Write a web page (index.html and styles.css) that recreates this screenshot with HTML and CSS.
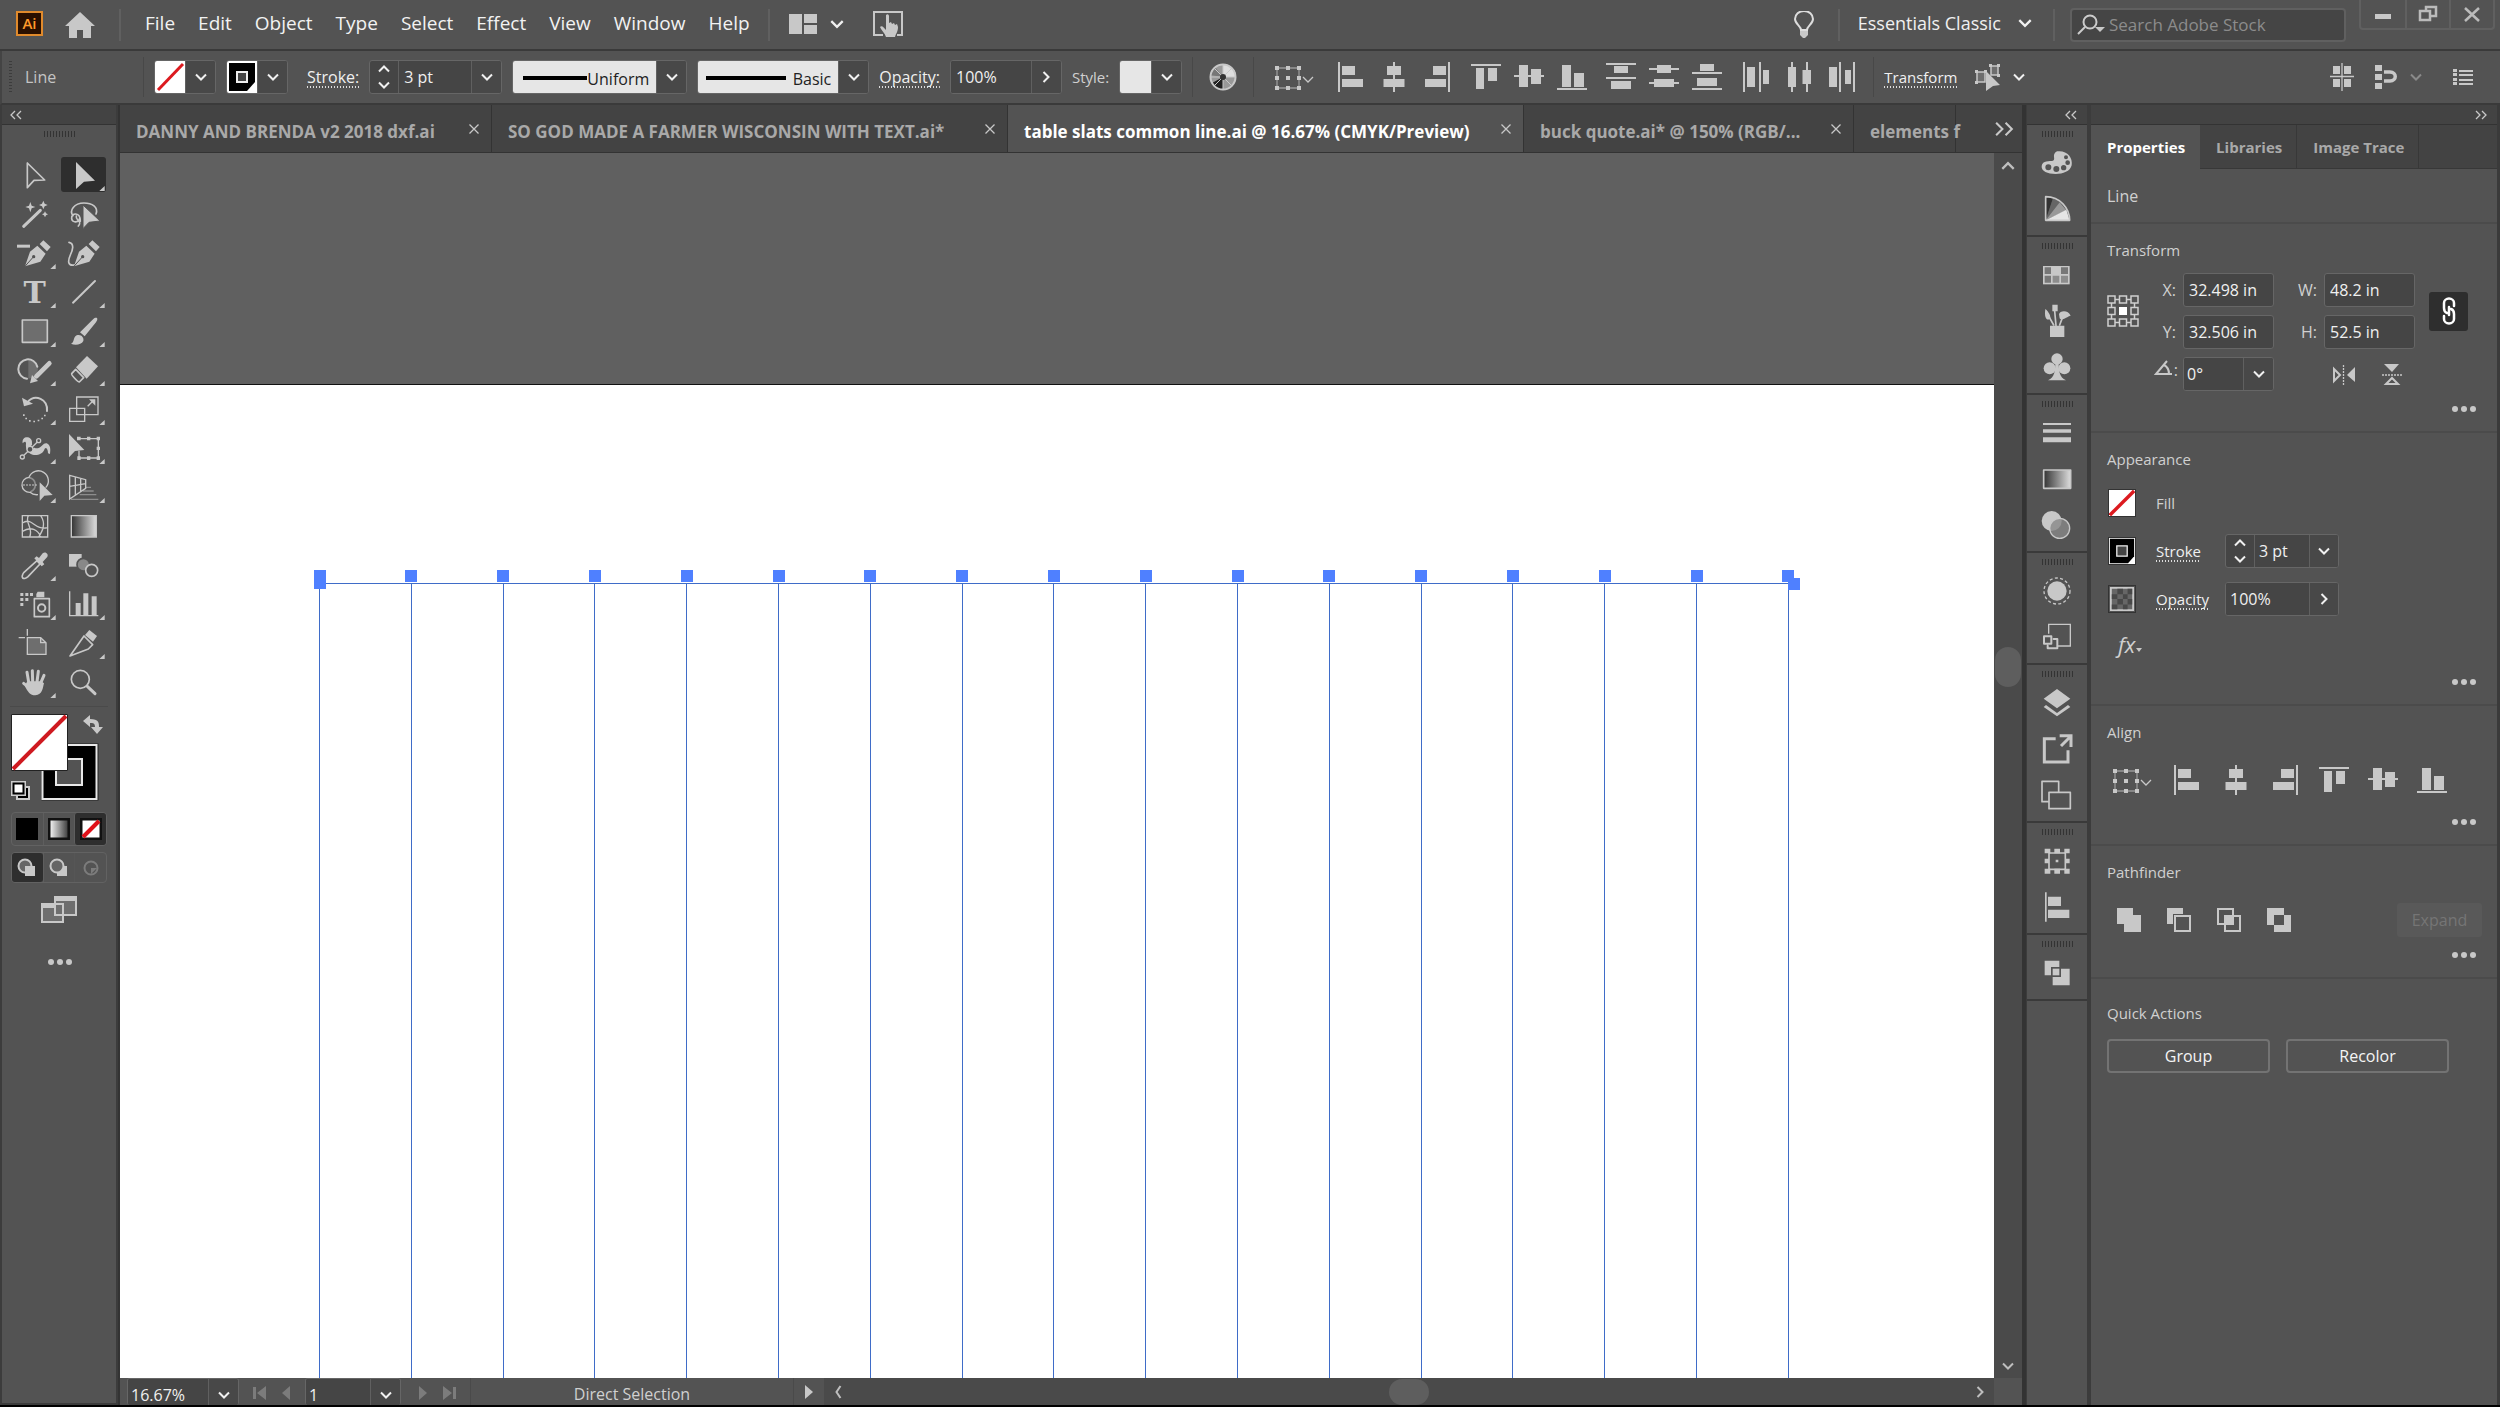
FILE: index.html
```
<!DOCTYPE html>
<html lang="en">
<head>
    <meta charset="utf-8">
    <meta name="viewport" content="width=device-width, initial-scale=1">
    <title>table slats common line.ai</title>
    <link rel="stylesheet" href="styles.css">
</head>
<body>

<!-- shared symbols -->
<svg class="defs" aria-hidden="true">
    <defs>
        <linearGradient id="fade"><stop offset="0" stop-color="#333"/><stop offset="1" stop-color="#ddd"/></linearGradient>
        <linearGradient id="fadeBack"><stop offset="0" stop-color="#fff"/><stop offset="1" stop-color="#333"/></linearGradient>
        <symbol id="down" viewBox="0 0 14 14"><path class="ln" d="M2 4.500l5 5 5-5"/></symbol>
        <symbol id="up" viewBox="0 0 14 14"><path class="ln" d="M2 9.500l5-5 5 5"/></symbol>
        <symbol id="right" viewBox="0 0 14 14"><path class="ln" d="M4.500 2l5 5-5 5"/></symbol>
        <symbol id="left" viewBox="0 0 14 14"><path class="ln" d="M9.500 1l-4 6 4 6"/></symbol>
        <symbol id="x" viewBox="0 0 14 14"><path class="thin" d="M2.500 2.500l9 9m0-9l-9 9"/></symbol>
        <symbol id="collapse" viewBox="0 0 14 14"><path class="thin" d="M6 3L2 7l4 4M12 3L8 7l4 4"/></symbol>
        <symbol id="expand" viewBox="0 0 14 14"><path class="thin" d="M2 3l4 4-4 4M8 3l4 4-4 4"/></symbol>
        <symbol id="dots" viewBox="0 0 24 8"><circle cx="3" cy="4" r="3"/><circle cx="12" cy="4" r="3"/><circle cx="21" cy="4" r="3"/></symbol>
        <symbol id="more" viewBox="0 0 135 105"><path d="M131 87v15h-16z"/></symbol>
        <symbol id="none" viewBox="0 0 30 30"><path fill="#fff" d="M0 0h30v30H0z"/><path stroke="#dc1a1f" stroke-width="4" d="M1 29L29 1"/></symbol>
        <symbol id="ring" viewBox="0 0 30 30"><path fill="#fff" d="M0 0h30v30H0z"/><path fill="#000" d="M1 1h28v20l-7 8H1z"/><path fill="#444" stroke="#eee" stroke-width="1.500" d="M9 9h12v12H9z"/></symbol>

        <symbol id="alignTo" viewBox="0 0 42 30"><path class="thin" stroke-opacity=".6" d="M5 6h22v20H5z"/><path d="M3 4h4v4H3zM14 4h4v4h-4zM25 4h4v4h-4zM3 14h4v4H3zM14 14h4v4h-4zM25 14h4v4h-4zM3 24h4v4H3zM14 24h4v4h-4zM25 24h4v4h-4z"/><path class="thin" stroke-width="2" d="M31 15l5 5 5-5"/></symbol>
        <symbol id="aLeft" viewBox="0 0 30 30"><path d="M2 0h2v30H2zM6 4h13v9H6zM6 17h21v8H6z"/></symbol>
        <symbol id="aCenter" viewBox="0 0 30 30"><path d="M14 0h2v30h-2zM8 4h14v9H8zM4.500 17h21v8h-21z"/></symbol>
        <symbol id="aRight" viewBox="0 0 30 30"><path d="M26 0h2v30h-2zM11 4h13v9H11zM3 17h21v8H3z"/></symbol>
        <symbol id="aTop" viewBox="0 0 30 30"><path d="M0 2h30v2H0zM5 6h8v21H5zM17 6h9v13h-9z"/></symbol>
        <symbol id="aMiddle" viewBox="0 0 30 30"><path d="M0 13h30v2H0zM5 3h9v22H5zM17 7h10v15H17z"/></symbol>
        <symbol id="aBottom" viewBox="0 0 30 30"><path d="M0 26h30v2H0zM5 3h9v22H5zM17 11h10v14H17z"/></symbol>
        <symbol id="dTop" viewBox="0 0 30 30"><path d="M0 1h30v2H0zM8 4h14v7H8zM0 15h30v2H0zM5 19h20v8H5z"/></symbol>
        <symbol id="dMiddle" viewBox="0 0 30 30"><path d="M0 6h30v2H0zM8 3h14v8H8zM0 20h30v2H0zM5 17h20v8H5z"/></symbol>
        <symbol id="dBottom" viewBox="0 0 30 30"><path d="M8 2h14v7H8zM0 10h30v2H0zM5 16h20v8H5zM0 26h30v2H0z"/></symbol>
        <symbol id="dLeft" viewBox="0 0 30 30"><path d="M2 0h2v30H2zM6 5h8v20H6zM18 0h2v30h-2zM22 8h6v14h-6z"/></symbol>
        <symbol id="dCenter" viewBox="0 0 30 30"><path d="M7 0h2v30H7zM4 5h8v20H4zM22 0h2v30h-2zM18.500 8H27v14h-8.500z"/></symbol>
        <symbol id="dRight" viewBox="0 0 30 30"><path d="M2 5h8v20H2zM12 0h2v30h-2zM18 8h6v14h-6zM26 0h2v30h-2z"/></symbol>
        <symbol id="nib" viewBox="0 0 135 105"><path d="M94 16l22 20-11 13-22-22zM76 32l25 24-16 24-46 14 15-44z"/><path stroke="#535353" stroke-width="3" d="M38 95l25-28"/><circle cx="65" cy="65" r="5" fill="#535353"/></symbol>
    </defs>
</svg>

<div class="app">

<header class="menubar">
    <span class="logo">Ai</span>
    <button class="home" aria-label="Home"><svg width="30" height="26" viewBox="0 0 30 26"><path d="M15 0L0 14h4v12h8v-8h6v8h8V14h4z"/></svg></button>
    <nav class="menus">
        <button>File</button><button>Edit</button><button>Object</button><button>Type</button><button>Select</button><button>Effect</button><button>View</button><button>Window</button><button>Help</button>
    </nav>
    <button class="arrange" aria-label="Arrange documents"><svg width="28" height="20" viewBox="0 0 28 20"><path d="M0 0h13v20H0zM15 0h13v9H15zM15 11h13v9H15z"/></svg><svg class="chev" width="16" height="16"><use href="#down"/></svg></button>
    <button aria-label="Touch workspace"><svg width="32" height="28" viewBox="0 0 32 28"><path fill="none" stroke="#c8c8c8" stroke-width="2" d="M11 25H2V2h28v23h-5"/><path d="M14 5c2-2 3 0 3 1v7l2-1 1 2 2-1 1 2 2-1 1 3c0 5-2 6-3 10h-9c-1-4-5-7-6-10 2-2 4 1 6 3z"/></svg></button>
    <div class="menuright">
        <button class="bulb" aria-label="Learn"><svg width="22" height="28" viewBox="0 0 22 28"><path fill="none" stroke="#ddd" stroke-width="2" d="M8 19c0-4-6-6-6-11a9 8 0 0118 0c0 5-6 7-6 11z"/><path d="M7 20h8v4l-3 3h-2l-3-3z"/></svg></button>
        <button class="workspace-name">Essentials Classic<svg width="16" height="16"><use href="#down"/></svg></button>
        <label class="search"><svg width="30" height="22" viewBox="0 0 30 22"><g fill="none" stroke="#ccc" stroke-width="2"><circle cx="13" cy="8" r="6.500"/><path d="M8 13l-7 7"/></g><path d="M18 13h10l-5 5z"/></svg><input type="search" placeholder="Search Adobe Stock" aria-label="Search Adobe Stock"></label>
        <div class="winbtns">
            <button aria-label="Minimize"><svg width="18" height="18" viewBox="0 0 18 18"><path d="M1 9h16v5H1z"/></svg></button>
            <button aria-label="Restore"><svg width="20" height="18" viewBox="0 0 20 18"><path fill="none" stroke="#bbb" stroke-width="2.500" d="M8 6V2h10v9h-5M2 6h10v9H2z"/></svg></button>
            <button aria-label="Close"><svg width="18" height="18" viewBox="0 0 18 18"><path stroke="#bbb" stroke-width="2.500" d="M2 3l14 13M16 3L2 16"/></svg></button>
        </div>
    </div>
</header>

<div class="control">
    <div class="kind"><i class="vgrip"></i>Line</div>
    <button class="combo swatch" aria-label="Fill"><svg width="30" height="32" viewBox="0 0 30 32"><path fill="#fff" d="M0 0h30v32H0z"/><path stroke="#dc1a1f" stroke-width="3" d="M3 29L28 3"/></svg><span class="drop"><svg width="14" height="14"><use href="#down"/></svg></span></button>
    <button class="combo swatch" aria-label="Stroke color"><svg width="30" height="32" viewBox="0 0 30 32"><path fill="#fff" d="M0 0h30v32H0z"/><path fill="#000" d="M2 2h26v19l-8 9H2z"/><path fill="#444" stroke="#eee" stroke-width="2" d="M10 11h10v10H10z"/></svg><span class="drop"><svg width="14" height="14"><use href="#down"/></svg></span></button>
    <label class="under first" for="cw">Stroke:</label>
    <div class="combo">
        <span class="step"><button aria-label="More"><svg width="14" height="14"><use href="#up"/></svg></button><button aria-label="Less"><svg width="14" height="14"><use href="#down"/></svg></button></span>
        <input id="cw" class="w72" value="3 pt"><button class="drop" aria-label="Stroke weights"><svg width="14" height="14"><use href="#down"/></svg></button>
    </div>
    <div class="combo"><select class="brush uniform" aria-label="Width profile"><option>Uniform</option></select><span class="drop"><svg width="14" height="14"><use href="#down"/></svg></span></div>
    <div class="combo"><select class="brush" aria-label="Brush"><option>Basic</option></select><span class="drop"><svg width="14" height="14"><use href="#down"/></svg></span></div>
    <label class="under" for="co">Opacity:</label>
    <div class="combo"><input id="co" class="w80" value="100%"><button class="drop" aria-label="Opacity slider"><svg width="14" height="14"><use href="#right"/></svg></button></div>
    <span class="dim">Style:</span>
    <button class="combo swatch" aria-label="Style"><span class="plain"></span><span class="drop"><svg width="14" height="14"><use href="#down"/></svg></span></button>
    <button class="wheel" aria-label="Recolor artwork"><svg width="28" height="28" viewBox="0 0 28 28"><circle cx="14" cy="14" r="13" fill="#999"/><path fill="#ddd" d="M14 14V1a13 13 0 0113 13z"/><path fill="#222" d="M14 14v13a13 13 0 01-11-7z"/><path fill="#777" d="M14 14L1 12 6 4z"/><g fill="none" stroke="#c8c8c8" stroke-width="2"><circle cx="14" cy="14" r="12.500"/><path stroke-width="1" d="M14 1v26M1 14h26M5 5l18 18M23 5L5 23"/></g><circle cx="14" cy="14" r="3" fill="#333"/></svg></button>
    <button class="alignto" aria-label="Align to"><svg width="42" height="30"><use href="#alignTo"/></svg></button>
    <div class="aligns">
        <div><button aria-label="Align left"><svg><use href="#aLeft"/></svg></button><button aria-label="Align center"><svg><use href="#aCenter"/></svg></button><button aria-label="Align right"><svg><use href="#aRight"/></svg></button></div>
        <div><button aria-label="Align top"><svg><use href="#aTop"/></svg></button><button aria-label="Align middle"><svg><use href="#aMiddle"/></svg></button><button aria-label="Align bottom"><svg><use href="#aBottom"/></svg></button></div>
        <div><button aria-label="Distribute top"><svg><use href="#dTop"/></svg></button><button aria-label="Distribute middle"><svg><use href="#dMiddle"/></svg></button><button aria-label="Distribute bottom"><svg><use href="#dBottom"/></svg></button></div>
        <div><button aria-label="Distribute left"><svg><use href="#dLeft"/></svg></button><button aria-label="Distribute center"><svg><use href="#dCenter"/></svg></button><button aria-label="Distribute right"><svg><use href="#dRight"/></svg></button></div>
    </div>
    <button class="under small">Transform</button>
    <button class="isolate" aria-label="Isolate"><svg width="28" height="28" viewBox="0 0 28 28"><g fill="#6e6e6e" stroke="#c8c8c8" stroke-width="1.500"><path d="M3 9h8v10H3zM17 3h7v9h-7z"/></g><path d="M1 7h3v3H1zM10 7h3v3h-3zM1 18h3v3H1zM15 1h3v3h-3zM23 1h3v3h-3zM23 11h3v3h-3zM12 8l14 14-7 1-7 5z"/></svg><svg class="chev" width="14" height="14"><use href="#down"/></svg></button>
    <div class="controlright">
        <button aria-label="Snap to pixel"><svg width="24" height="28" viewBox="0 0 24 28"><path d="M3 3h7v8H3zM14 3h7v8h-7zM3 16h7v8H3zM14 16h7v8h-7z"/><path class="thin" d="M12 0v28M0 13.500h24"/></svg></button>
        <button class="snap" aria-label="Snap options"><svg width="24" height="26" viewBox="0 0 24 26"><path d="M1 1h7v6H1zM1 10h7v6H1zM1 19h7v6H1z"/><path fill="none" stroke="#c8c8c8" stroke-width="3.500" d="M10 8h6c7 0 7 9 0 9h-6"/></svg><svg class="faint" width="14" height="14"><use href="#down"/></svg></button>
        <button aria-label="Panel menu"><svg width="20" height="18" viewBox="0 0 20 18"><path d="M0 1h4v3H0zM0 5h4v3H0zM0 10h4v3H0zM0 14h4v3H0zM6 2h14v2H6zM6 6h14v2H6zM6 11h14v2H6zM6 15h14v2H6z"/></svg></button>
    </div>
</div>

<div class="body">

<aside class="toolbox">
    <div class="fold"><svg width="14" height="14"><use href="#collapse"/></svg></div>
    <i class="grip"></i>
    <div class="tools">
        <button aria-label="Selection"><svg viewBox="0 0 135 105"><path class="o" d="M46 18v74l20-22 32-1z"/></svg></button>
        <button class="on" aria-label="Direct selection"><svg viewBox="0 0 135 105"><path d="M45 15v81l24-22 33-3z"/><use href="#more"/></svg></button>
        <button aria-label="Magic wand"><svg viewBox="0 0 135 105"><path class="o w9" d="M35 91l50-48"/><path d="M55 18l4 11 11 4-11 4-4 12-4-12-11-4 11-4zM94 14l4 9 9 4-9 4-4 9-4-9-9-4 9-4zM99 46l3 6 6 3-6 3-3 6-3-6-6-3 6-3z"/></svg></button>
        <button aria-label="Lasso"><svg viewBox="0 0 135 105"><path class="o" d="M105 54c8-21-12-33-36-33-30 0-45 23-33 38M58 76c0-30-28-26-26-8 1 14 23 12 24-2M46 60c-4 14 20 14 6 30"/><path stroke="#535353" stroke-width="3" d="M66 27v71l18-19 33-4z"/></svg></button>
        <button aria-label="Delete anchor point"><svg viewBox="0 0 135 105"><path d="M15 29h39v9H15z"/><use href="#nib"/><use href="#more"/></svg></button>
        <button aria-label="Curvature"><svg viewBox="0 0 135 105"><path class="o" d="M24 22c18 4 10 26 4 38-8 18-8 34 12 30"/><use href="#nib"/></svg></button>
        <button aria-label="Type"><svg viewBox="0 0 135 105"><text class="tee" x="68" y="87">T</text><use href="#more"/></svg></button>
        <button aria-label="Line segment"><svg viewBox="0 0 135 105"><path class="o w6" d="M36 86l66-65"/><use href="#more"/></svg></button>
        <button aria-label="Rectangle"><svg viewBox="0 0 135 105"><path class="o f" d="M31 21h75v67H31z"/><use href="#more"/></svg></button>
        <button aria-label="Paintbrush"><svg viewBox="0 0 135 105"><path d="M108 15c3 3-1 10-3 13L71 70 57 58 97 18c3-3 8-5 11-3zM30 92c12-4 4-17 17-25 12-5 23 6 20 17-6 12-26 14-37 8z"/><use href="#more"/></svg></button>
        <button aria-label="Shaper"><svg viewBox="0 0 135 105"><path class="f" d="M49 22a29 29 0 010 58z"/><path class="o w6" d="M45 80A29 29 0 1176 44"/><path class="o w14" d="M112 34L73 73"/><path d="M54 94l6-25 18 18z"/><use href="#more"/></svg></button>
        <button aria-label="Eraser"><svg viewBox="0 0 135 105"><path d="M78 12l33 31-34 37-32-34z"/><path class="o" d="M44 52L32 65c-2 3 18 25 23 25l13-13z"/><use href="#more"/></svg></button>
        <button aria-label="Rotate"><svg viewBox="0 0 135 105"><path class="o w6" d="M46 34c24-28 62-8 59 26"/><path d="M30 20l6 26 27-8z"/><path d="M33 70h5v5h-5zM40 80h5v5h-5zM51 87h5v5h-5zM64 89h5v5h-5zM77 86h5v5h-5zM88 80h5v5h-5zM96 71h5v5h-5z"/><use href="#more"/></svg></button>
        <button aria-label="Scale"><svg viewBox="0 0 135 105"><path class="o s4" d="M47 18h64v53H47zM26 52h45v39H26zM80 46l18-18"/><path d="M84 25h19v19z"/><use href="#more"/></svg></button>
        <button aria-label="Width"><svg viewBox="0 0 135 105"><path d="M32 40c-4-26 30-22 28-2-1 10 8 20 20 16 10-4 14-16 24-14 12 4 12 20 10 32l-6-2c0-10-4-20-10-14-4 16-24 22-36 18-16-4-22-18-20-34-2-8-6-4-10 0z"/><path stroke="#535353" stroke-width="10" d="M36 76l40-40"/><g class="o s4"><path d="M36 76l40-40"/><circle cx="31" cy="81" r="6"/><circle class="bg" cx="54" cy="58" r="9"/><circle cx="80" cy="32" r="6"/></g><use href="#more"/></svg></button>
        <button aria-label="Free transform"><svg viewBox="0 0 135 105"><path class="o s4" d="M54 26h58v58H54V62"/><path d="M24 12v70l18-19 28-3zM48 20h11v11H48zM78 20h10v11H78zM107 20h10v11h-10zM107 50h10v10h-10zM107 79h10v11h-10zM78 79h10v11H78zM49 79h10v11H49z"/><use href="#more"/></svg></button>
        <button aria-label="Shape builder"><svg viewBox="0 0 135 105"><path class="o s4" d="M78 77a30 30 0 01-24-7A22 22 0 1151 25 30 30 0 11101 56"/><path class="o s4" stroke-dasharray="4 5" d="M34 48h45"/><path class="o" stroke-width="2" stroke-opacity=".5" d="M52 26a22 22 0 014 42"/><path d="M83 40v56l14-16 25-2z"/><use href="#more"/></svg></button>
        <button aria-label="Perspective grid"><svg viewBox="0 0 135 105"><path class="o s4" d="M26 19l48 13v26L26 90zM43 24v54M59 28v42M26 52l48-8"/><path class="o s4" stroke-opacity=".5" d="M75 55h15M66 66h32M56 77h50M30 91h82"/><use href="#more"/></svg></button>
        <button aria-label="Mesh"><svg viewBox="0 0 135 105"><path class="o s4" d="M31 23h76v64H31zM49 23c-12 22 16 36 4 64M86 23c18 26 4 48-6 64M31 45c30-20 36 24 76 14M31 70c26-16 46-6 56 17"/></svg></button>
        <button aria-label="Gradient"><svg viewBox="0 0 135 105"><path class="o s4 fade" d="M31 23h75v64H31z"/></svg></button>
        <button aria-label="Eyedropper"><svg viewBox="0 0 135 105"><path class="o" d="M75 41L36 76c-4 5-8 14-4 17s12 0 16-4l36-38z"/><path d="M67 34l7-6 7 5 11-14c8-8 20 3 13 12L92 45l5 7-8 6z"/><use href="#more"/></svg></button>
        <button aria-label="Blend"><svg viewBox="0 0 135 105"><path d="M24 21h38v38H24z"/><circle cx="67" cy="53" r="19" fill="#888" stroke="#535353" stroke-width="5"/><circle class="o bg" cx="92" cy="70" r="18"/></svg></button>
        <button aria-label="Symbol sprayer"><svg viewBox="0 0 135 105"><path d="M25 21h9v9h-9zM40 21h9v9h-9zM54 21h9v9h-9zM25 36h9v9h-9zM40 36h9v9h-9zM25 51h9v9h-9zM77 17h20v17H73V24z"/><path class="o" d="M67 38h45v54H67z"/><circle class="o w6" cx="89" cy="66" r="11"/><use href="#more"/></svg></button>
        <button aria-label="Column graph"><svg viewBox="0 0 135 105"><path class="o s4" d="M26 16v73h86"/><path d="M44 51h15v37H44zM67 22h15v66H67zM92 31h15v57H92z"/><use href="#more"/></svg></button>
        <button aria-label="Artboard"><svg viewBox="0 0 135 105"><path class="o s4 f" d="M46 38h40l16 15v35H46z"/><path class="o s4" d="M46 12v20M20 38h19M86 38v15h16"/></svg></button>
        <button aria-label="Slice"><svg viewBox="0 0 135 105"><path class="o" d="M27 93l42-60 26 26-13 13z"/><path d="M85 15l23 18-12 17-24-20z"/><use href="#more"/></svg></button>
        <button aria-label="Hand"><svg viewBox="0 0 135 105"><path class="o w9" d="M51 60L45 25M62 54l-1-34M75 54l4-32M84 62l12-28M55 74L35 58"/><path d="M46 52h42l8 6c-4 14-4 34-26 36-16 0-22-10-32-28z"/><use href="#more"/></svg></button>
        <button aria-label="Zoom"><svg viewBox="0 0 135 105"><circle class="o" cx="58" cy="46" r="27"/><path class="o w9" d="M79 67l23 22"/></svg></button>
    </div>

    <div class="paint">
        <svg width="96" height="90" viewBox="0 0 96 90">
            <path d="M72 7l7-6v4c9 0 9 4 9 8h4l-6 7-6-7h4c0-4-2-4-5-4v4z"/>
            <path fill="#000" stroke="#222" stroke-width="3" d="M32 31h54v54H32z"/><path fill="#000" stroke="#e8e8e8" stroke-width="2" d="M31.500 31h54v54h-54z"/>
            <path fill="#535353" stroke="#e8e8e8" stroke-width="2" d="M45 45h26v26H45z"/>
            <path fill="#fff" stroke="#222" d="M.5.5h56v56H.5z"/><path stroke="#cf1a20" stroke-width="4" d="M2 55L55 2"/>
            <path fill="#000" stroke="#ccc" stroke-width="2" d="M6 73h12v12H6z"/><path fill="#fff" stroke="#ccc" stroke-width="3" d="M1.500 68.500h12v12h-12z"/><path fill="#fff" stroke="#000" stroke-width="2" d="M2.500 69.500h10v10h-10z"/>
        </svg>
    </div>
    <div class="trio">
        <button aria-label="Color"><svg width="22" height="22"><path fill="#000" d="M0 0h22v22H0z"/></svg></button>
        <button aria-label="Gradient fill"><svg width="22" height="22"><path fill="url(#fadeBack)" stroke="#111" stroke-width="3" d="M1 1h20v20H1z"/></svg></button>
        <button class="on" aria-label="None"><svg width="22" height="22" viewBox="0 0 22 22"><path fill="#fff" stroke="#111" stroke-width="3" d="M1 1h20v20H1z"/><path stroke="#e0121a" stroke-width="4" d="M3 19L19 3"/></svg></button>
    </div>
    <div class="trio second">
        <button class="on" aria-label="Draw normal"><svg width="20" height="20"><circle cx="8" cy="8" r="6.500" fill="#666" stroke="#c8c8c8" stroke-width="2"/><path d="M8 8h10v10H8z"/></svg></button>
        <button aria-label="Draw behind"><svg width="20" height="20"><path d="M8 8h10v10H8z"/><circle cx="8" cy="8" r="6.500" fill="#666" stroke="#c8c8c8" stroke-width="2"/></svg></button>
        <button class="faint" aria-label="Draw inside" disabled><svg width="16" height="16"><circle cx="8" cy="8" r="6.500" fill="none" stroke="#c8c8c8" stroke-width="2"/><path d="M8 8h6l-6 6z"/></svg></button>
    </div>
    <button class="screens" aria-label="Screen mode"><svg width="36" height="28" viewBox="0 0 36 28"><path fill="#6e6e6e" stroke="#c8c8c8" stroke-width="2" d="M1 8h21v18H1zM14 1h21v18H14z"/><path d="M0 7h13v5H0zM13 0h23v5H13z"/></svg></button>
    <button class="edit" aria-label="Edit toolbar"><svg width="24" height="8"><use href="#dots"/></svg></button>
</aside>

<main class="doc">
    <div class="doctabs">
        <div class="doctab t1"><span>DANNY AND BRENDA v2 2018 dxf.ai</span><button aria-label="Close tab"><svg width="14" height="14"><use href="#x"/></svg></button></div>
        <div class="doctab t2"><span>SO GOD MADE A FARMER WISCONSIN WITH TEXT.ai*</span><button aria-label="Close tab"><svg width="14" height="14"><use href="#x"/></svg></button></div>
        <div class="doctab t2 active"><span>table slats common line.ai @ 16.67% (CMYK/Preview)</span><button aria-label="Close tab"><svg width="14" height="14"><use href="#x"/></svg></button></div>
        <div class="doctab t3"><span>buck quote.ai* @ 150% (RGB/...</span><button aria-label="Close tab"><svg width="14" height="14"><use href="#x"/></svg></button></div>
        <div class="doctab t4"><span>elements f</span></div>
        <button class="overflow" aria-label="More documents"><svg width="22" height="22"><use href="#expand"/></svg></button>
    </div>
    <div class="view">
        <svg class="canvas">
            <rect y="231" width="100%" height="100%" fill="#111"/>
            <rect y="232" width="100%" height="100%" fill="#fff"/>
            <!-- slat lines, clipped by the view -->
            <path class="slat" d="M199.500 430.500H1668M199.500 430v2000M291.500 430v2000M383.500 430v2000M474.500 430v2000M566.500 430v2000M658.500 430v2000M750.500 430v2000M842.500 430v2000M933.500 430v2000M1025.500 430v2000M1117.500 430v2000M1209.500 430v2000M1301.500 430v2000M1392.500 430v2000M1484.500 430v2000M1576.500 430v2000M1668.500 430v2000"/>
            <path class="anchor" d="M194 417h12v19h-12zM285 417h12v12h-12zM377 417h12v12h-12zM469 417h12v12h-12zM561 417h12v12h-12zM653 417h12v12h-12zM744 417h12v12h-12zM836 417h12v12h-12zM928 417h12v12h-12zM1020 417h12v12h-12zM1112 417h12v12h-12zM1203 417h12v12h-12zM1295 417h12v12h-12zM1387 417h12v12h-12zM1479 417h12v12h-12zM1571 417h12v12h-12zM1662 417h12v12h-12zM1668 425h12v12h-12z"/>
        </svg>
        <div class="vscroll"><svg width="16" height="16"><use href="#up"/></svg><i></i><svg width="14" height="14"><use href="#down"/></svg></div>
    </div>
    <footer class="status">
        <div class="combo"><input class="w80" value="16.67%" aria-label="Zoom"><button class="drop" aria-label="Zoom levels"><svg width="14" height="14"><use href="#down"/></svg></button></div>
        <div class="nav"><svg width="14" height="14" viewBox="0 0 14 14"><path d="M0 1h3v12H0zM13 0v14L4 7z"/></svg><svg width="10" height="14" viewBox="0 0 10 14"><path d="M9 0v14L1 7z"/></svg></div>
        <div class="combo"><input class="w64" value="1" aria-label="Artboard"><button class="drop" aria-label="Artboards"><svg width="14" height="14"><use href="#down"/></svg></button></div>
        <div class="nav next"><svg width="10" height="14" viewBox="0 0 10 14"><path d="M1 0v14l8-7z"/></svg><svg width="14" height="14" viewBox="0 0 14 14"><path d="M11 1h3v12h-3zM1 0v14l9-7z"/></svg></div>
        <div class="current">Direct Selection</div>
        <button class="play" aria-label="Status options"><svg width="10" height="14" viewBox="0 0 10 14"><path d="M1 0v14l8-7z"/></svg></button>
        <div class="hscroll"><svg width="14" height="14"><use href="#left"/></svg><i></i><svg width="14" height="14"><use href="#right"/></svg></div>
        <div class="corner"></div>
    </footer>
</main>

<aside class="dock">
    <div class="fold"><svg width="14" height="14"><use href="#collapse"/></svg></div>
    <div class="group"><i class="grip"></i>
        <button aria-label="Color"><svg viewBox="0 0 108 108"><path fill-rule="evenodd" d="M54 19c30-4 48 18 44 42-4 18-26 26-48 26-24 0-44-8-42-24 2-18 24-14 34-16 10-4-6-18 12-28zM28 58a9 9 0 100 18 9 9 0 000-18zM52 63a9 9 0 100 18 9 9 0 000-18zM74 60a8 8 0 100 16 8 8 0 000-16zM86 46a7 7 0 100 14 7 7 0 000-14zM81 31a6 6 0 100 12 6 6 0 000-12z"/></svg></button>
        <button aria-label="Color guide"><svg viewBox="0 0 108 108"><path fill="#333" d="M20 88V18l22 4z"/><path fill="#666" d="M20 88l22-66 20 12z"/><path fill="#999" d="M20 88l42-54 20 24z"/><path fill="#e5e5e5" d="M20 88l62-32 10 32z"/><path class="o" d="M20 88V17c44 0 72 36 72 71z"/></svg></button>
    </div>
    <div class="group"><i class="grip"></i>
        <button aria-label="Swatches"><svg viewBox="0 0 108 108"><path d="M12 27h80v55H12z"/><path fill="#777" d="M17 31h19v20H17zM66 31h21v20H66zM17 56h19v21H17z"/><path fill="#8c8c8c" d="M41 56h20v21H41zM66 56h21v21H66z"/></svg></button>
        <button aria-label="Brushes"><svg viewBox="0 0 108 108"><path d="M33 68h43v34H33zM40 5h16v20H40z"/><path class="o" d="M47 24l4 44M44 66L26 34M62 66l12-32"/><path d="M19 18c10 8 18 22 14 30-10 6-18-4-14-30zM60 34c2-12 28-14 35 4-10 2-28 18-33 8z"/></svg></button>
        <button aria-label="Symbols"><svg viewBox="0 0 108 108"><circle cx="54" cy="30" r="17"/><circle cx="32" cy="58" r="18"/><circle cx="76" cy="58" r="18"/><path d="M49 40h10c0 24 2 46 22 54H27c20-8 22-30 22-54z"/></svg></button>
    </div>
    <div class="group"><i class="grip"></i>
        <button aria-label="Stroke"><svg viewBox="0 0 108 108"><path d="M12 24h84v6H12zM12 43h84v10H12zM12 67h84v15H12z"/></svg></button>
        <button aria-label="Gradient"><svg viewBox="0 0 108 108"><path class="o fade" d="M14 27h81v55H14z"/></svg></button>
        <button aria-label="Transparency"><svg viewBox="0 0 108 108"><circle cx="38" cy="42" r="30"/><circle cx="62" cy="64" r="30" fill="#888" fill-opacity=".8" stroke="#c8c8c8" stroke-width="4"/></svg></button>
    </div>
    <div class="group"><i class="grip"></i>
        <button aria-label="Appearance"><svg viewBox="0 0 108 108"><circle cx="54" cy="54" r="29"/><circle class="o s4" stroke-dasharray="9 7" cx="54" cy="54" r="39"/></svg></button>
        <button aria-label="Graphic styles"><svg viewBox="0 0 108 108"><path class="o s4" d="M29 44V16h65v65H56"/><path class="o w6" d="M15 52h22v22H15zM44 60h11v28H26V80"/></svg></button>
    </div>
    <div class="group"><i class="grip"></i>
        <button aria-label="Layers"><svg viewBox="0 0 108 108"><path d="M54 12l40 29-40 29-40-29zM14 66l7-6 33 24 33-24 7 6-40 28z"/></svg></button>
        <button aria-label="Asset export"><svg viewBox="0 0 108 108"><path fill="none" stroke="#c8c8c8" stroke-width="9" d="M50 23H16v70h71V58M66 45l30-30M62 14h34v34"/></svg></button>
        <button aria-label="Artboards"><svg viewBox="0 0 108 108"><path class="o" d="M29 74H9V13h50v32M30 46h64v49H30z"/></svg></button>
    </div>
    <div class="group"><i class="grip"></i>
        <button aria-label="Transform"><svg viewBox="0 0 108 108"><path class="o" d="M30 30h49v49H30z"/><path d="M17 17h17v14H17zM46 17h17v14H46zM76 17h16v14H76zM17 47h13v14H17zM79 47h13v14H79zM17 77h17v15H17zM46 77h17v15H46zM76 77h16v15H76zM50 50h8v8h-8z"/></svg></button>
        <button aria-label="Align"><svg viewBox="0 0 108 108"><path d="M18 10h5v88h-5zM27 23h39v28H27zM27 62h64v25H27z"/></svg></button>
    </div>
    <div class="group"><i class="grip"></i>
        <button aria-label="Pathfinder"><svg viewBox="0 0 108 108"><path d="M17 17h44v19H36v25H17zM66 41h26v50H41V66h25z"/><path d="M41 41h20v20H41z"/></svg></button>
    </div>
</aside>

<aside class="props">
    <div class="fold end"><svg width="14" height="14"><use href="#expand"/></svg></div>
    <div class="ptabs"><button class="active">Properties</button><button>Libraries</button><button>Image Trace</button></div>
    <section class="kindrow">Line</section>
    <section>
        <h2>Transform</h2>
        <div class="xform">
            <button class="ref" aria-label="Reference point"><svg width="32" height="32" viewBox="0 0 32 32"><path fill="none" stroke="#d0d0d0" stroke-width="1.500" d="M1 1h7v7H1zM12.500 1h7v7h-7zM24 1h7v7h-7zM1 12.500h7v7H1zM24 12.500h7v7h-7zM1 24h7v7H1zM12.500 24h7v7h-7zM24 24h7v7h-7zM8 4.500h4M20 4.500h4M8 27.500h4M20 27.500h4M4.500 8v4M4.500 20v4M27.500 8v4M27.500 20v4"/><path fill="#fff" d="M12 12h8v8h-8z"/></svg></button>
            <label for="px">X:</label><input id="px" value="32.498 in">
            <label for="pw">W:</label><input id="pw" value="48.2 in">
            <button class="link" aria-label="Constrain proportions"><svg width="14" height="28" viewBox="0 0 14 28"><path fill="none" stroke="#fff" stroke-width="2.500" stroke-linecap="round" d="M5 16c-3-1-3-3-3-5V6a5 4.500 0 0110 0v3M9 12c3 1 3 3 3 5v5a5 4.500 0 01-10 0v-3M7 10v8"/></svg></button>
            <label for="py">Y:</label><input id="py" value="32.506 in">
            <label for="ph">H:</label><input id="ph" value="52.5 in">
            <label class="angle" for="pa"><svg width="20" height="16" viewBox="0 0 20 16"><path fill="none" stroke="#c8c8c8" stroke-width="2" d="M13 1L2 14h16M10 5c4 2 5 5 5 9"/></svg>:</label>
            <div class="combo"><input id="pa" value="0°"><button class="drop" aria-label="Angles"><svg width="14" height="14"><use href="#down"/></svg></button></div>
            <div class="flips">
                <button aria-label="Flip horizontal"><svg width="24" height="20" viewBox="0 0 24 20"><path fill="none" stroke="#c8c8c8" stroke-width="2" d="M2 4l6 6-6 6z"/><path d="M23 2v15l-8-7z"/><path class="thin" stroke-dasharray="2 1" d="M11.500 0v20"/></svg></button>
                <button aria-label="Flip vertical"><svg width="20" height="24" viewBox="0 0 20 24"><path d="M2 1h15l-7 8z"/><path fill="none" stroke="#c8c8c8" stroke-width="2" d="M4 21h12l-6-6z"/><path class="thin" stroke-dasharray="2 1" d="M0 12h20"/></svg></button>
            </div>
        </div>
        <button class="opts near" aria-label="More options"><svg width="24" height="8"><use href="#dots"/></svg></button>
    </section>
    <section>
        <h2>Appearance</h2>
        <div class="looks">
            <div class="look"><svg class="chip" width="28" height="28"><use href="#none"/></svg><span>Fill</span></div>
            <div class="look"><svg class="chip" width="28" height="28"><use href="#ring"/></svg><span><label class="under" for="sw">Stroke</label></span>
                <div class="combo"><span class="step"><button aria-label="More"><svg width="14" height="14"><use href="#up"/></svg></button><button aria-label="Less"><svg width="14" height="14"><use href="#down"/></svg></button></span><input id="sw" value="3 pt"><button class="drop" aria-label="Weights"><svg width="14" height="14"><use href="#down"/></svg></button></div></div>
            <div class="look"><svg class="chip" width="28" height="28" viewBox="0 0 28 28"><path fill="#666" stroke="#c8c8c8" stroke-width="2" d="M2 2h24v24H2z"/><path fill="#484848" d="M9 3h6v6H9zM20 3h5v6h-5zM3 9h6v5H3zM15 9h5v5h-5zM9 14h6v6H9zM20 14h5v6h-5zM3 20h6v5H3zM15 20h5v5h-5z"/></svg><span><label class="under" for="op">Opacity</label></span>
                <div class="combo"><input id="op" value="100%"><button class="drop" aria-label="Opacity slider"><svg width="14" height="14"><use href="#right"/></svg></button></div></div>
        </div>
        <button class="fx" aria-label="Effects">fx<svg width="6" height="4"><path d="M0 0h6L3 4z"/></svg></button>
        <button class="opts" aria-label="More options"><svg width="24" height="8"><use href="#dots"/></svg></button>
    </section>
    <section>
        <h2>Align</h2>
        <div class="palign"><button class="to" aria-label="Align to"><svg><use href="#alignTo"/></svg></button><button aria-label="Left"><svg><use href="#aLeft"/></svg></button><button aria-label="Center"><svg><use href="#aCenter"/></svg></button><button aria-label="Right"><svg><use href="#aRight"/></svg></button><button aria-label="Top"><svg><use href="#aTop"/></svg></button><button aria-label="Middle"><svg><use href="#aMiddle"/></svg></button><button aria-label="Bottom"><svg><use href="#aBottom"/></svg></button></div>
        <button class="opts" aria-label="More options"><svg width="24" height="8"><use href="#dots"/></svg></button>
    </section>
    <section>
        <h2>Pathfinder</h2>
        <div class="finder">
            <button aria-label="Unite"><svg width="24" height="24"><path d="M0 0h16v7h8v17H7v-8H0z"/></svg></button>
            <button aria-label="Minus front"><svg width="24" height="24"><path d="M0 0h16v6H6v10H0z"/><path fill="none" stroke="#c8c8c8" stroke-width="2" d="M8 8h15v15H8z"/></svg></button>
            <button aria-label="Intersect"><svg width="24" height="24"><path fill="none" stroke="#c8c8c8" stroke-width="2" d="M1 1h15v15H1zM8 8h15v15H8z"/><path d="M8 8h8v8H8z"/></svg></button>
            <button aria-label="Exclude"><svg width="24" height="24"><path fill-rule="evenodd" d="M0 0h17v7h7v17H7v-7H0zM7 7v10h10V7z"/></svg></button>
            <button class="expandbtn" disabled>Expand</button>
        </div>
        <button class="opts near" aria-label="More options"><svg width="24" height="8"><use href="#dots"/></svg></button>
    </section>
    <section class="quick">
        <h2>Quick Actions</h2>
        <div><button>Group</button><button>Recolor</button></div>
    </section>
</aside>

</div>
</div>
</body>
</html>
```
FILE: styles.css
```
* { box-sizing: border-box; }

body {
    margin: 0;
    background: #000;
    color: #d0d0d0;
    font: 16px/20px "Open Sans", "Noto Sans", sans-serif;
}

button, input, select { font: inherit; color: inherit; }
button {
    display: flex;
    align-items: center;
    justify-content: center;
    padding: 0;
    border: 0;
    background: none;
}
input, select {
    border: 0;
    outline: 0;
    border-radius: 0;
    min-width: 0;
}
h2 { margin: 0; font-size: 15px; font-weight: 400; line-height: 20px; }

svg { display: block; flex: none; fill: #c8c8c8; }
.defs { position: absolute; width: 0; height: 0; }
.ln { fill: none; stroke: #f0f0f0; stroke-width: 2; }
.thin { fill: none; stroke: #c8c8c8; stroke-width: 1.3; }
.o { fill: none; stroke: #c8c8c8; stroke-width: 5; stroke-linecap: round; stroke-linejoin: round; }
.s4 { stroke-width: 4; stroke-linecap: butt; stroke-linejoin: miter; }
.w6 { stroke-width: 6; }
.w9 { stroke-width: 9; }
.w14 { stroke-width: 14; }
.f { fill: #6e6e6e; }
.bg { fill: #535353; }
.fade { fill: url(#fade); }
.faint { opacity: .35; }

.app {
    display: flex;
    flex-direction: column;
    height: 100vh;
    padding-bottom: 2px;
}

/* menu bar */
.menubar {
    display: flex;
    align-items: center;
    height: 51px;
    padding-left: 16px;
    background: #535353;
    border-bottom: 2px solid #3a3a3a;
}
.menubar > button { margin-bottom: 2px; }
.logo {
    width: 27px;
    height: 25px;
    margin-bottom: 3px;
    border: 2px solid #e08a2c;
    background: #2a1000;
    color: #ff9a2a;
    font-size: 15px;
    line-height: 21px;
    font-weight: 600;
    text-align: center;
}
.menubar .home { margin: 0 24px 0 22px; }
.menus {
    display: flex;
    align-items: center;
    gap: 23px;
    height: 32px;
    padding: 0 18px 3px 24px;
    border-left: 2px solid #606060;
    border-right: 2px solid #606060;
    color: #f2f2f2;
    font-size: 19px;
}
.arrange { margin: 0 27px 0 19px; gap: 12px; }
.menuright { display: flex; align-items: center; margin-left: auto; height: 100%; }
.bulb { height: 32px; padding-right: 23px; border-right: 2px solid #606060; }
.workspace-name {
    gap: 16px;
    height: 32px;
    padding: 0 20px 3px 18px;
    border-right: 2px solid #606060;
    color: #f0f0f0;
    font-size: 18px;
}
.search {
    display: flex;
    align-items: center;
    gap: 2px;
    width: 276px;
    height: 34px;
    margin: 0 13px 0 15px;
    padding-left: 5px;
    border: 2px solid #606060;
    border-radius: 4px;
    background: #454545;
}
.search input { width: 220px; padding: 0; background: none; font-size: 17px; }
.search input::placeholder { color: #8c8c8c; }
.winbtns {
    display: flex;
    align-self: flex-start;
    height: 30px;
    margin-right: 5px;
    border: 2px solid #606060;
    border-top: 0;
    border-radius: 0 0 4px 4px;
}
.winbtns button { width: 44px; }
.winbtns button + button { border-left: 2px solid #606060; }

/* control bar */
.control {
    display: flex;
    align-items: center;
    gap: 10px;
    height: 54px;
    padding-bottom: 1px;
    background: #535353;
    border-bottom: 2px solid #3a3a3a;
    border-left: 2px solid #444;
}
.kind {
    display: flex;
    align-items: center;
    gap: 13px;
    width: 142px;
    height: 40px;
    padding-left: 7px;
    border-right: 1px solid #484848;
    color: #c4c4c4;
}
.vgrip {
    width: 3px;
    height: 32px;
    background: repeating-linear-gradient(#3c3c3c 0 1px, #535353 1px 3px);
}
.combo {
    display: flex;
    height: 34px;
    border: 1px solid #666;
    border-radius: 3px;
    overflow: hidden;
    background: #454545;
    color: #f0f0f0;
}
.combo input { padding: 0 5px; background: #454545; }
.combo .drop {
    display: flex;
    align-items: center;
    justify-content: center;
    width: 30px;
    background: #484848;
    border-left: 1px solid #606060;
    flex: none;
}
.step {
    display: flex;
    flex-direction: column;
    justify-content: space-around;
    width: 29px;
    border-right: 1px solid #606060;
}
.w64 { width: 64px; }
.w72 { width: 72px; }
.w80 { width: 80px; }
.swatch { height: 34px; align-items: stretch; }
.plain { width: 31px; background: #e6e6e6; }
.under {
    color: #f0f0f0;
    background: repeating-linear-gradient(90deg, #ddd 0 1px, transparent 1px 3px) bottom / 100% 2px no-repeat;
    line-height: 22px;
}
.small { font-size: 15px; }
.first { margin-left: 9px; }
.dim { font-size: 15px; }
.brush {
    appearance: none;
    width: 140px;
    padding: 4px 7px 0 0;
    background: linear-gradient(#000, #000) 8px 15px / 80px 4px no-repeat #e6e6e6;
    color: #222;
    text-align-last: right;
}
.uniform { width: 143px; background-size: 64px 4px; background-position: 10px 15px; }
.wheel {
    height: 40px;
    padding: 0 16px;
    border-left: 1px solid #484848;
    border-right: 1px solid #484848;
}
.alignto { margin: 0 5px 0 8px; }
.aligns { display: flex; gap: 6px; padding-right: 10px; border-right: 1px solid #484848; height: 40px; align-items: center; }
.aligns div { display: flex; }
.aligns button { width: 43px; height: 34px; }
.aligns svg { width: 30px; height: 30px; }
.isolate { gap: 10px; margin-left: 7px; }
.controlright { display: flex; gap: 20px; align-items: center; margin: 0 27px 0 auto; }
.snap { gap: 11px; margin-right: 10px; }

/* left toolbox */
.body { display: flex; flex: 1; min-height: 0; background: #333; }
.fold {
    display: flex;
    align-items: center;
    height: 20px;
    padding: 0 9px;
    background: #434343;
    border-bottom: 1px solid #333;
}
.fold.end { justify-content: flex-end; }
.grip {
    display: block;
    width: 31px;
    height: 6px;
    margin: 6px auto 3px;
    background: repeating-linear-gradient(90deg, #333 0 1px, #535353 1px 3px);
}
.toolbox {
    width: 118px;
    margin-right: 2px;
    border: solid #3c3c3c;
    border-width: 0 2px 2px;
    background: #535353;
}
.toolbox .fold { padding-left: 7px; }
.tools {
    display: grid;
    grid-template-columns: 45px 45px;
    grid-auto-rows: 35px;
    gap: 4px;
    margin: 20px 8px 0;
    padding: 0 2px 7px;
    height: 550px;
    border-bottom: 1px solid #4a4a4a;
}
.tools svg { width: 45px; height: 35px; }
.tools .on { background: #2e2e2e; border-radius: 3px; }
.tee {
    font: bold 90px "DejaVu Serif", serif;
    text-anchor: middle;
}
.paint { margin: 7px 0 0 9px; }
.paint svg { overflow: visible; }
.trio {
    display: flex;
    width: 96px;
    height: 34px;
    margin: 8px 0 0 9px;
    border: 1px solid #626262;
    border-radius: 4px;
}
.trio button { flex: 1; }
.trio button + button { border-left: 1px solid #5e5e5e; }
.trio .on { background: #2e2e2e; border-radius: 3px; }
.second { height: 31px; margin-top: 6px; }
.screens { margin: 13px auto 0 39px; }
.edit { margin: 34px auto 0 46px; }

/* document */
.doc { display: flex; flex-direction: column; flex: 1; min-width: 0; }
.doctabs {
    display: flex;
    height: 48px;
    background: #434343;
    border-bottom: 1px solid #333;
    color: #a9a9a9;
    font-weight: 700;
    font-size: 17px;
}
.doctab {
    display: flex;
    align-items: center;
    justify-content: space-between;
    padding: 6px 10px 0 16px;
    border-right: 1px solid #333;
    white-space: nowrap;
}
.doctab button { margin-bottom: 6px; }
.t1 { width: 372px; }
.t2 { width: 516px; }
.t3 { width: 330px; }
.t4 { width: 102px; padding-right: 0; }
.doctabs .active { background: #535353; color: #fff; }
.overflow { margin: 0 7px 0 auto; }
.view { display: flex; flex: 1; min-height: 0; }
.canvas { flex: 1; height: 100%; min-width: 0; background: #606060; }
.slat { fill: none; stroke: #3f6cc8; stroke-width: 1; }
.anchor { fill: #4f80ff; }
.vscroll {
    display: flex;
    flex-direction: column;
    align-items: center;
    width: 28px;
    padding: 5px 0;
    background: #4a4a4a;
}
.vscroll i { width: 26px; height: 40px; margin: 473px 0 auto; border-radius: 13px; background: #5e5e5e; }
.vscroll svg, .hscroll svg { opacity: .7; }
.status {
    display: flex;
    align-items: stretch;
    height: 27px;
    padding-left: 7px;
    background: #535353;
}
.status .combo { height: 27px; border-bottom: 0; }
.status .combo input { padding: 5px 3px 0; }
.status .drop { padding-top: 5px; }
.nav { display: flex; align-items: center; gap: 14px; padding: 2px 14px 0; opacity: .35; }
.next { padding: 2px 14px 0 17px; }
.current { width: 324px; padding-top: 6px; border: solid #4a4a4a; border-width: 0 1px; text-align: center; }
.play { width: 30px; }
.hscroll {
    display: flex;
    flex: 1;
    align-items: center;
    padding: 0 7px;
    background: #4a4a4a;
}
.hscroll i { width: 40px; height: 26px; margin: 0 auto 0 544px; border-radius: 13px; background: #5e5e5e; }
.corner { width: 28px; }

/* icon dock */
.dock { width: 65px; margin-left: 4px; background: #535353; border: solid #3c3c3c; border-width: 0 4px 0 1px; }
.dock .fold { justify-content: flex-end; }
.group { padding: 0 0 3px; border-bottom: 2px solid #3a3a3a; display: flow-root; }
.group button { width: 100%; height: 46px; }
.group svg { width: 36px; height: 36px; }

/* properties */
.props { width: 409px; border-right: 3px solid #3a3a3a; background: #535353; }
.ptabs { display: flex; height: 44px; background: #434343; }
.ptabs button {
    padding: 0 14px 0 16px;
    border: solid #383838;
    border-width: 0 1px 1px 0;
    color: #a9a9a9;
    font-size: 15px;
    font-weight: 700;
}
.ptabs::after { content: ""; flex: 1; border-bottom: 1px solid #383838; }
.ptabs .active { background: #535353; border-color: #535353; color: #fff; }
.props section { padding: 16px 15px 12px 16px; border-bottom: 2px solid #4b4b4b; }
.props .kindrow { padding: 17px 16px 16px; }
.xform {
    display: grid;
    grid-template-columns: 32px 44px 91px 50px 91px 53px;
    grid-auto-rows: 34px;
    row-gap: 8px;
    align-items: center;
    margin-top: 13px;
}
.xform label { padding-right: 7px; text-align: right; }
.xform .angle { display: flex; justify-content: flex-end; padding: 0 5px 8px 0; }
.xform > input { height: 34px; padding: 0 5px; border: 1px solid #666; border-radius: 3px; background: #454545; color: #f0f0f0; }
.xform .combo input { width: 60px; padding: 0 3px; }
.ref { grid-column: 1; grid-row: 1 / 3; }
.link { grid-column: 6; grid-row: 1 / 3; width: 39px; height: 39px; margin-left: 14px; border-radius: 3px; background: #2e2e2e; }
.xform label[for=py], .xform label[for=pa] { grid-column: 2; }
.flips { display: flex; gap: 26px; grid-column: 4 / 7; padding: 2px 0 0 58px; align-items: center; }
.opts { height: 20px; margin: 15px 6px 0 auto; }
.near { margin-top: 8px; }
.looks { display: flex; flex-direction: column; gap: 14px; margin: 17px 0 15px; }
.look { display: flex; align-items: center; height: 34px; padding-left: 1px; }
.look > span { width: 69px; margin-left: 20px; font-size: 15px; }
.look > span label { display: inline-block; }
.chip { border: 1px solid #333; }
.look .combo { width: 114px; }
.look .combo input { flex: 1; padding: 0 4px; }
.look .drop { width: 29px; }
.fx { margin-left: 11px; height: 26px; font: italic 22px/26px "Open Sans", sans-serif; }
.fx svg { margin: 12px 0 0 1px; }
.palign { display: flex; height: 34px; margin-top: 21px; }
.palign button { width: 49px; }
.palign .to { width: 55px; padding-left: 3px; justify-content: flex-start; }
.palign svg { width: 30px; height: 30px; }
.palign .to svg { width: 42px; }
.finder { display: flex; align-items: center; gap: 26px; height: 34px; margin-top: 21px; padding-left: 10px; }
.expandbtn { width: 85px; height: 34px; margin-left: auto; border-radius: 3px; background: #595959; color: #757575; }
.props .quick { padding-top: 24px; border: 0; }
.quick div { display: flex; gap: 16px; margin-top: 16px; }
.quick button { width: 163px; height: 34px; border: 2px solid #737373; border-radius: 4px; color: #f5f5f5; }
```
